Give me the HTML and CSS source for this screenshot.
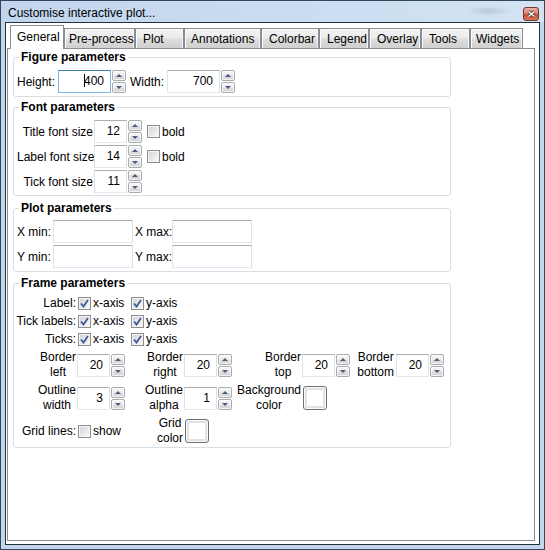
FILE: index.html
```html
<!DOCTYPE html>
<html lang="en">
<head>
    <meta charset="UTF-8">
    <title>Customise interactive plot...</title>
    <link rel="stylesheet" href="styles.css">
</head>
<body>
<div class="window">
    <div class="titlebar">
        <span class="title">Customise interactive plot...</span>
        <span class="close">
            <svg width="9" height="8" viewBox="0 0 9 8"><path d="M1.5 1.5 L7.5 6.5 M7.5 1.5 L1.5 6.5" stroke="#5a2a22" stroke-width="3"/><path d="M1.5 1.5 L7.5 6.5 M7.5 1.5 L1.5 6.5" stroke="#fff" stroke-width="1.6"/></svg>
        </span>
    </div>
    <div class="client">
        <div class="tabbar">
            <div class="tab active t-general">General</div>
            <div class="tab t-pre">Pre-process</div>
            <div class="tab t-plot">Plot</div>
            <div class="tab t-annot">Annotations</div>
            <div class="tab t-cbar">Colorbar</div>
            <div class="tab t-legend">Legend</div>
            <div class="tab t-overlay">Overlay</div>
            <div class="tab t-tools">Tools</div>
            <div class="tab t-widgets">Widgets</div>
        </div>
        <div class="pane">
            <fieldset class="group g-figure">
                <legend>Figure parameters</legend>
                <div class="fig-row">
                    <span class="lbl lbl-height">Height:</span>
                    <div class="spin wide">
                        <div class="field focus"><span class="caret"></span>400</div>
                        <div class="arrows"><span class="up"></span><span class="down"></span></div>
                    </div>
                    <span class="lbl lbl-width">Width:</span>
                    <div class="spin wide">
                        <div class="field">700</div>
                        <div class="arrows"><span class="up"></span><span class="down"></span></div>
                    </div>
                </div>
            </fieldset>

            <fieldset class="group g-font">
                <legend>Font parameters</legend>
                <div class="font-row">
                    <span class="lbl font-lbl">Title font size</span>
                    <div class="spin">
                        <div class="field">12</div>
                        <div class="arrows"><span class="up"></span><span class="down"></span></div>
                    </div>
                    <span class="check-item bold-check"><span class="check"></span>bold</span>
                </div>
                <div class="font-row">
                    <span class="lbl font-lbl">Label font size</span>
                    <div class="spin">
                        <div class="field">14</div>
                        <div class="arrows"><span class="up"></span><span class="down"></span></div>
                    </div>
                    <span class="check-item bold-check"><span class="check"></span>bold</span>
                </div>
                <div class="font-row">
                    <span class="lbl font-lbl">Tick font size</span>
                    <div class="spin">
                        <div class="field">11</div>
                        <div class="arrows"><span class="up"></span><span class="down"></span></div>
                    </div>
                </div>
            </fieldset>

            <fieldset class="group g-plot">
                <legend>Plot parameters</legend>
                <div class="plot-grid">
                    <span class="lbl">X min:</span>
                    <div class="field long"></div>
                    <span class="lbl">X max:</span>
                    <div class="field long"></div>
                    <span class="lbl">Y min:</span>
                    <div class="field long"></div>
                    <span class="lbl">Y max:</span>
                    <div class="field long"></div>
                </div>
            </fieldset>

            <fieldset class="group g-frame">
                <legend>Frame parameters</legend>
                <div class="axis-row">
                    <span class="lbl axis-lbl">Label:</span>
                    <span class="check-item axis"><span class="check on"><svg width="9" height="9" viewBox="0 0 9 9"><path d="M1 4.5 L3.5 7.5 L8 1" fill="none" stroke="#3f5595" stroke-width="1.7"/></svg></span>x-axis</span>
                    <span class="check-item axis"><span class="check on"><svg width="9" height="9" viewBox="0 0 9 9"><path d="M1 4.5 L3.5 7.5 L8 1" fill="none" stroke="#3f5595" stroke-width="1.7"/></svg></span>y-axis</span>
                </div>
                <div class="axis-row">
                    <span class="lbl axis-lbl">Tick labels:</span>
                    <span class="check-item axis"><span class="check on"><svg width="9" height="9" viewBox="0 0 9 9"><path d="M1 4.5 L3.5 7.5 L8 1" fill="none" stroke="#3f5595" stroke-width="1.7"/></svg></span>x-axis</span>
                    <span class="check-item axis"><span class="check on"><svg width="9" height="9" viewBox="0 0 9 9"><path d="M1 4.5 L3.5 7.5 L8 1" fill="none" stroke="#3f5595" stroke-width="1.7"/></svg></span>y-axis</span>
                </div>
                <div class="axis-row">
                    <span class="lbl axis-lbl">Ticks:</span>
                    <span class="check-item axis"><span class="check on"><svg width="9" height="9" viewBox="0 0 9 9"><path d="M1 4.5 L3.5 7.5 L8 1" fill="none" stroke="#3f5595" stroke-width="1.7"/></svg></span>x-axis</span>
                    <span class="check-item axis"><span class="check on"><svg width="9" height="9" viewBox="0 0 9 9"><path d="M1 4.5 L3.5 7.5 L8 1" fill="none" stroke="#3f5595" stroke-width="1.7"/></svg></span>y-axis</span>
                </div>

                <div class="params">
                    <span class="plbl">Border<br>left</span>
                    <div class="spin">
                        <div class="field">20</div>
                        <div class="arrows"><span class="up"></span><span class="down"></span></div>
                    </div>
                    <span class="plbl">Border<br>right</span>
                    <div class="spin">
                        <div class="field">20</div>
                        <div class="arrows"><span class="up"></span><span class="down"></span></div>
                    </div>
                    <span class="plbl">Border<br>top</span>
                    <div class="spin">
                        <div class="field">20</div>
                        <div class="arrows"><span class="up"></span><span class="down"></span></div>
                    </div>
                    <span class="plbl pl-bottom">Border<br>bottom</span>
                    <div class="spin">
                        <div class="field">20</div>
                        <div class="arrows"><span class="up"></span><span class="down"></span></div>
                    </div>

                    <span class="plbl">Outline<br>width</span>
                    <div class="spin">
                        <div class="field">3</div>
                        <div class="arrows"><span class="up"></span><span class="down"></span></div>
                    </div>
                    <span class="plbl">Outline<br>alpha</span>
                    <div class="spin">
                        <div class="field">1</div>
                        <div class="arrows"><span class="up"></span><span class="down"></span></div>
                    </div>
                    <span class="plbl">Background<br>color</span>
                    <span class="swatch"></span>
                    <span></span>
                    <span></span>

                    <span class="plbl">Grid lines:</span>
                    <span class="check-item grid-check"><span class="check"></span>show</span>
                    <span class="plbl">Grid<br>color</span>
                    <span class="swatch"></span>
                </div>
            </fieldset>
        </div>
    </div>
</div>
</body>
</html>
```

FILE: styles.css
```css
* {
    box-sizing: border-box;
}
body {
    margin: 0;
    font-family: "Liberation Sans", Arial, sans-serif;
    font-size: 12px;
    color: #000;
    background: #c4d8ee;
}
.window {
    width: 545px;
    height: 550px;
    border: 1px solid #34465c;
    background: #c2d6ed;
    display: flex;
    flex-direction: column;
}
.titlebar {
    height: 21px;
    display: flex;
    justify-content: space-between;
    align-items: flex-start;
    background:
        radial-gradient(ellipse 22px 5px at 488px 10px, rgba(120, 140, 165, 0.3), rgba(120, 140, 165, 0)),
        linear-gradient(to right, #c1d5ed, #d3e3f4);
}
.title {
    margin: 5px 0 0 7px;
    line-height: 14px;
}
.close {
    width: 16px;
    height: 14px;
    margin: 6px 5px 0 0;
    border: 1px solid #6e3a30;
    border-radius: 3px;
    background: linear-gradient(#eab2a4, #d98670 45%, #c5513a 55%, #d9755a);
    display: flex;
    align-items: center;
    justify-content: center;
}
.client {
    flex: 1;
    margin: 0 4px 4px;
    border: 1px solid #26313e;
    background: #fff;
    display: flex;
    flex-direction: column;
}

/* tabs */
.tabbar {
    display: flex;
    align-items: flex-end;
    height: 25px;
    padding-left: 4px;
}
.tab {
    height: 20px;
    border: 1px solid #898c95;
    border-bottom: 0;
    padding: 3px 0 0 6px;
    line-height: 14px;
    white-space: nowrap;
    overflow: hidden;
    background: linear-gradient(#f3f3f3, #ebebeb 45%, #dddddd 55%, #cfcfcf);
    box-shadow: inset 1px 1px 0 #fcfcfc, inset -1px 0 0 #f4f4f4;
}
.tab.active {
    height: 24px;
    padding-top: 4px;
    margin-bottom: -1px;
    background: #fff;
    box-shadow: none;
    position: relative;
    z-index: 1;
}
.t-general { width: 54px; }
.t-pre { width: 71px; padding-left: 4px; }
.t-plot { width: 49px; padding-left: 7px; }
.t-annot { width: 77px; }
.t-cbar { width: 58px; padding-left: 7px; }
.t-legend { width: 50px; padding-left: 7px; }
.t-overlay { width: 52px; padding-left: 7px; }
.t-tools { width: 49px; padding-left: 7px; }
.t-widgets { width: 53px; padding-left: 5px; }

.pane {
    flex: 1;
    margin: 0 4px 3px 1px;
    border: 1px solid #898c95;
    padding: 1px 0 0 5px;
}

/* group boxes */
.group {
    width: 438px;
    margin: 0;
    padding: 0 0 3px 3px;
    border: 1px solid #d5dfe5;
    border-radius: 3px;
    min-inline-size: 0;
}
.group legend {
    font-weight: bold;
    line-height: 14px;
    padding: 0 2px;
    margin-left: 2px;
}
.g-figure { padding-top: 6px; padding-bottom: 3px; }
.g-font { margin-top: 3px; padding-top: 6px; padding-bottom: 2px; }
.g-plot { margin-top: 5px; padding-top: 5px; padding-bottom: 3px; }
.g-frame { margin-top: 4px; padding-top: 4px; padding-bottom: 1px; }

.lbl {
    white-space: nowrap;
}

/* spin boxes */
.spin {
    display: flex;
}
.field {
    width: 33px;
    height: 23px;
    border: 1px solid;
    border-color: #abadb3 #dbdfe6 #e3e9ef #e2e3ea;
    background: #fff;
    text-align: right;
    padding-right: 6px;
    line-height: 21px;
    white-space: nowrap;
}
.field.focus {
    border-color: #3c7fb1 #7eb4ea #7eb4ea #7eb4ea;
}
.caret {
    display: inline-block;
    width: 1px;
    height: 13px;
    margin-right: -1px;
    vertical-align: -2px;
    background: #000;
}
.spin.wide .field {
    width: 53px;
}
.arrows {
    margin-left: 1px;
    display: flex;
    flex-direction: column;
    gap: 1px;
}
.arrows span {
    width: 14px;
    height: 11px;
    border: 1px solid #a9abae;
    border-radius: 2px;
    background: linear-gradient(#f7f7f7, #ececec 50%, #dedede 50%, #d4d4d4);
    box-shadow: inset 0 0 0 1px rgba(255, 255, 255, 0.7);
    display: flex;
    align-items: center;
    justify-content: center;
}
.arrows .up::after,
.arrows .down::after {
    content: "";
    border-left: 3px solid transparent;
    border-right: 3px solid transparent;
}
.arrows .up::after {
    border-bottom: 3px solid #4b5c82;
}
.arrows .down::after {
    border-top: 3px solid #4b5c82;
}

/* check boxes */
.check-item {
    display: flex;
    align-items: center;
    white-space: nowrap;
}
.check {
    width: 13px;
    height: 13px;
    margin-right: 2px;
    padding: 1px;
    border: 1px solid #8e8f8f;
    background: linear-gradient(135deg, #d3d6dc, #f7f7f7) content-box, #f4f4f4;
    display: flex;
    align-items: center;
    justify-content: center;
}

/* figure */
.fig-row {
    display: flex;
    align-items: center;
    height: 23px;
}
.lbl-height { width: 41px; }
.lbl-width { width: 37px; margin-left: 4px; }

/* font */
.font-row {
    display: flex;
    align-items: center;
    height: 23px;
    margin-bottom: 2px;
}
.font-row:last-child {
    margin-bottom: 0;
}
.font-lbl {
    width: 76px;
    margin-right: 1px;
    text-align: right;
}
.bold-check {
    margin-left: 5px;
}

/* plot */
.plot-grid {
    display: grid;
    grid-template-columns: 34px 80px 35px 80px;
    grid-auto-rows: 23px;
    column-gap: 2px;
    row-gap: 2px;
    align-items: center;
}
.field.long {
    width: 80px;
}

/* frame */
.axis-row {
    display: flex;
    align-items: center;
    height: 18px;
}
.axis-lbl {
    width: 59px;
    text-align: right;
    display: flex;
    justify-content: flex-end;
}
.axis {
    width: 53px;
}
.axis-lbl + .axis {
    margin-left: 2px;
}
.params {
    display: grid;
    grid-template-columns: 60px 51px 56px 51px 67px 51px 43px 51px;
    grid-template-rows: 30px 30px 30px;
    row-gap: 3px;
    margin-top: 2px;
    align-items: center;
}
.plbl {
    justify-self: end;
    text-align: center;
    line-height: 15px;
    white-space: nowrap;
    margin-right: 1px;
}
.plbl.pl-bottom {
    margin-right: 2px;
}
.grid-check {
    margin-left: 1px;
}
.swatch {
    width: 24px;
    height: 24px;
    margin-left: 1px;
    border: 1px solid #707070;
    border-radius: 3px;
    background: #fff;
    box-shadow: inset 0 0 0 1px #fafafa, inset 0 0 0 3px #e2e2e2;
}
```
